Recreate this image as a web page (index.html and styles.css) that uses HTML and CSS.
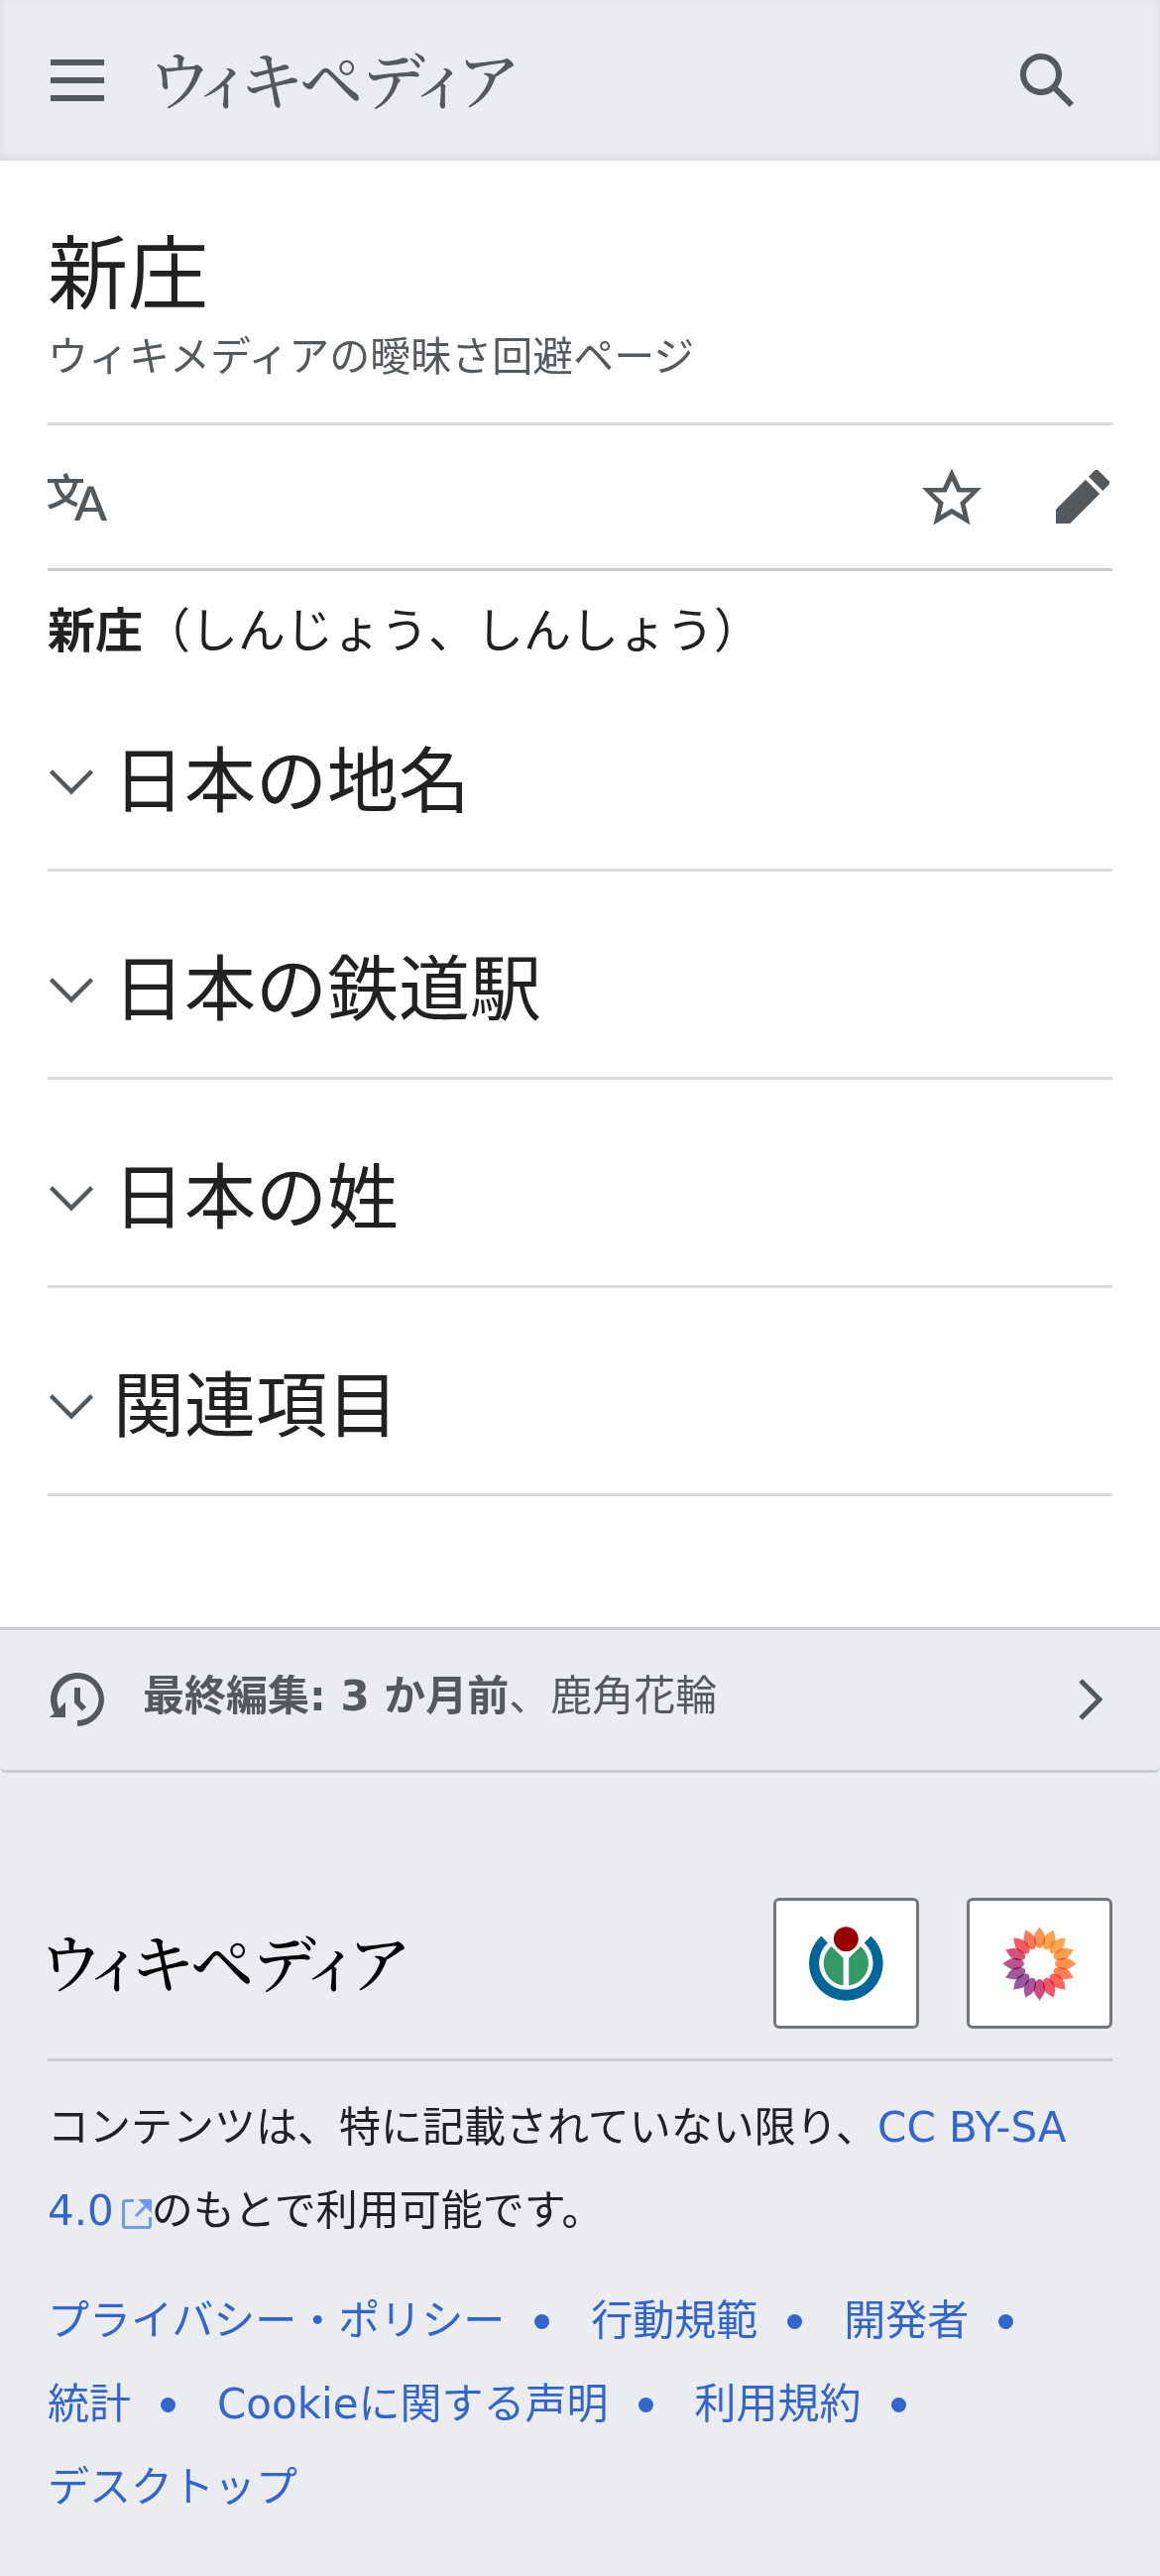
FILE: index.html
```html
<!DOCTYPE html>
<html lang="ja">
<head>
<meta charset="utf-8">
<meta name="viewport" content="width=device-width">
<title>新庄 - ウィキペディア</title>
<link rel="stylesheet" href="styles.css">
</head>
<body>
<header class="site-header">
  <button class="icon-button" type="button" aria-label="メニュー">
    <svg class="icon" viewBox="0 0 20 20"><path d="M1 3v2h18V3zm0 8h18V9H1zm0 6h18v-2H1z"/></svg>
  </button>
  <a class="wordmark" href="#">ウィキペディア</a>
  <button class="icon-button search" type="button" aria-label="検索">
    <svg class="icon" viewBox="0 0 20 20"><path fill-rule="evenodd" d="M12.2 13.6a7 7 0 1 1 1.4-1.4l5.4 5.4-1.4 1.4zM13 8A5 5 0 1 1 3 8a5 5 0 0 1 10 0"/></svg>
  </button>
</header>

<main class="content">
  <div class="heading">
    <h1>新庄</h1>
    <p class="tagline">ウィキメディアの曖昧さ回避ページ</p>
  </div>
  <nav class="actions" aria-label="ページ操作">
    <a href="#" aria-label="言語"><svg class="icon" viewBox="0 0 20 20"><path d="M20 18h-1.44a.6.600 0 0 1-.4-.12.800.800 0 0 1-.23-.31L17 15h-5l-1 2.540a.8.800 0 0 1-.22.300.6.600 0 0 1-.4.140H9l4.550-11.470h1.890zm-3.530-4.310L14.890 9.500a12 12 0 0 1-.39-1.240q-.090.370-.19.690l-.19.560-1.580 4.190zm-6.300-1.580a13.400 13.400 0 0 1-2.910-1.410 11.460 11.460 0 0 0 2.810-5.370H12V4H7.310a4 4 0 0 0-.2-.56C6.870 2.790 6.600 2 6.600 2l-1.470.500s.4.890.6 1.500H0v1.330h2.150A11.230 11.230 0 0 0 5 10.700a17.200 17.200 0 0 1-5 2.100q.560.820.870 1.380a23.300 23.300 0 0 0 5.220-2.510 15.600 15.600 0 0 0 3.560 1.770zM3.630 5.330h4.910a8.100 8.100 0 0 1-2.450 4.450 9.100 9.100 0 0 1-2.460-4.450"/></svg></a>
    <a class="push" href="#" aria-label="ウォッチ"><svg class="icon" viewBox="0 0 20 20"><path d="M20 7h-7L10 .500 7 7H0l5.460 5.470-1.640 7 6.180-3.700 6.180 3.730-1.630-7zm-10 6.900-3.760 2.270 1-4.280L3.500 8.500h4.610L10 4.600l1.900 3.900h4.600l-3.730 3.400 1 4.280z"/></svg></a>
    <a href="#" aria-label="編集"><svg class="icon" viewBox="0 0 20 20"><path d="m16.770 8 1.940-2a1 1 0 0 0 0-1.410l-3.340-3.300a1 1 0 0 0-1.410 0L12 3.230zM1 14.250V19h4.750l9.960-9.960-4.750-4.750z"/></svg></a>
  </nav>
  <p class="lead"><b>新庄</b>（しんじょう、しんしょう）</p>
  <h2><button type="button"><svg class="chevron" viewBox="0 0 14 14"><path d="M1 4l6 6 6-6" fill="none" stroke="currentColor" stroke-width="1.300"/></svg>日本の地名</button></h2>
  <h2><button type="button"><svg class="chevron" viewBox="0 0 14 14"><path d="M1 4l6 6 6-6" fill="none" stroke="currentColor" stroke-width="1.300"/></svg>日本の鉄道駅</button></h2>
  <h2><button type="button"><svg class="chevron" viewBox="0 0 14 14"><path d="M1 4l6 6 6-6" fill="none" stroke="currentColor" stroke-width="1.300"/></svg>日本の姓</button></h2>
  <h2><button type="button"><svg class="chevron" viewBox="0 0 14 14"><path d="M1 4l6 6 6-6" fill="none" stroke="currentColor" stroke-width="1.300"/></svg>関連項目</button></h2>
</main>

<footer class="site-footer">
  <div class="last-edit">
    <svg class="icon" viewBox="0 0 20 20"><path d="M10 1a9 9 0 0 0-7.700 13.640L.6 16H6v-5.200l-2.100 2.300A7 7 0 1 1 10 17v2a9 9 0 0 0 0-18M9 6v5.200l2.600 2.600 1.400-1.300-2-2V6z"/></svg>
    <p><a class="edited" href="#">最終編集: 3 か月前</a>、<a href="#">鹿角花輪</a></p>
    <svg class="next" viewBox="0 0 24 42"><path d="M2 2l19 19L2 40" fill="none" stroke="currentColor" stroke-width="5"/></svg>
  </div>
  <div class="footer-body">
    <div class="brand">
      <span class="wordmark">ウィキペディア</span>
      <a class="badge" href="#" aria-label="Wikimedia Foundation">
        <svg viewBox="168 152 226 226">
          <path fill="#069" d="M205 181A112.500 112.500 0 1 0 356 181L336 202A82 82 0 1 1 225 202Z"/>
          <path fill="#396" d="M236 212A68 68 0 0 0 272 331V248ZM325 212A68 68 0 0 1 289 331V248Z"/>
          <circle cx="280.500" cy="190" r="37.500" fill="#900"/>
        </svg>
      </a>
      <a class="badge" href="#" aria-label="MediaWiki">
        <svg class="flower" viewBox="-113 -113 226 226">
          <defs><path id="petal" d="M0-112C5-102 19-92 17-73C15-58 9-48 0-47C-9-48-15-58-17-73C-19-92-5-102 0-112Z"/></defs>
          <use href="#petal" fill="#fb9450"/>
          <use href="#petal" fill="#fba44c" transform="rotate(22.500)"/>
          <use href="#petal" fill="#fca850" transform="rotate(45)"/>
          <use href="#petal" fill="#fd9e50" transform="rotate(67.500)"/>
          <use href="#petal" fill="#fe9353" transform="rotate(90)"/>
          <use href="#petal" fill="#ff8056" transform="rotate(112.500)"/>
          <use href="#petal" fill="#ff655b" transform="rotate(135)"/>
          <use href="#petal" fill="#ef5668" transform="rotate(157.500)"/>
          <use href="#petal" fill="#cc4e78" transform="rotate(180)"/>
          <use href="#petal" fill="#a85596" transform="rotate(202.500)"/>
          <use href="#petal" fill="#9659a0" transform="rotate(225)"/>
          <use href="#petal" fill="#a35897" transform="rotate(247.500)"/>
          <use href="#petal" fill="#b9558a" transform="rotate(270)"/>
          <use href="#petal" fill="#d25579" transform="rotate(292.500)"/>
          <use href="#petal" fill="#f45a66" transform="rotate(315)"/>
          <use href="#petal" fill="#fd7659" transform="rotate(337.500)"/>
        </svg>
      </a>
    </div>
    <p class="license">コンテンツは、特に記載されていない限り、<a href="#">CC BY-SA 4.0<svg class="external" viewBox="0 0 30 30"><path fill="none" stroke="currentColor" stroke-width="3" d="M12 1.500H3.500a2 2 0 0 0-2 2V26.500a2 2 0 0 0 2 2H26.500a2 2 0 0 0 2-2V18M14 17L25 6"/><path fill="currentColor" d="M16 0H30V14Z"/></svg></a>のもとで利用可能です。</p>
    <ul class="places">
      <li><a href="#">プライバシー・ポリシー</a></li>
      <li><a href="#">行動規範</a></li>
      <li><a href="#">開発者</a></li>
      <li><a href="#">統計</a></li>
      <li><a href="#">Cookieに関する声明</a></li>
      <li><a href="#">利用規約</a></li>
      <li><a href="#">デスクトップ</a></li>
    </ul>
  </div>
</footer>
</body>
</html>
```
FILE: styles.css
```css
* { box-sizing: border-box; }
body {
  margin: 0;
  background: #eaecf0;
  color: #202122;
  font: 42px/84px "DejaVu Sans", "Noto Sans CJK JP", sans-serif;
}
h1, h2, p, ul { margin: 0; padding: 0; font-weight: 400; }
a { color: #3366cc; text-decoration: none; }
button { padding: 0; border: 0; background: none; color: inherit; font: inherit; }
svg { display: block; }
.icon { width: 60px; height: 60px; fill: #54595d; }

.site-header {
  display: flex;
  align-items: center;
  height: 162px;
  padding: 0 84px 0 48px;
  box-shadow: inset 0 -3px 9px rgba(0, 0, 0, 0.08);
}
.wordmark {
  padding-bottom: 8px;
  color: #54595d;
  font: 500 64px/84px "Noto Serif CJK JP", "Noto Sans CJK JP", serif;
  font-feature-settings: "palt";
  white-space: nowrap;
}
.site-header .wordmark { margin-left: 44px; }
.search { margin-left: auto; }

.content { padding: 0 48px 132px; background: #fff; }
.heading { padding: 62px 0 36px; border-bottom: 3px solid #dadbdc; }
h1 { font-size: 81px; line-height: 106px; }
.tagline { color: #54595d; font-size: 41px; line-height: 60px; }
.actions {
  display: flex;
  align-items: center;
  gap: 72px;
  height: 147px;
  border-bottom: 3px solid #c8cbcc;
}
.actions .push { margin-left: auto; }
.lead { padding: 20px 0 17px; font-size: 48px; line-height: 80px; }
h2 { height: 210px; padding-top: 30px; border-bottom: 3px solid #dadbdc; font-size: 72px; }
h2:first-of-type { height: 186px; padding-top: 6px; }
h2 button {
  display: flex;
  align-items: center;
  gap: 18px;
  width: 100%;
  height: 100%;
  text-align: left;
}
.chevron { width: 48px; height: 48px; color: #54595d; }

.last-edit {
  display: flex;
  align-items: center;
  height: 147px;
  padding: 0 58px 2px 48px;
  border: solid #c8ccd1;
  border-width: 3px 0;
  border-radius: 0 0 6px 6px;
  color: #54595d;
}
.last-edit p { flex: 1; margin-left: 36px; padding-bottom: 6px; }
.last-edit a { color: inherit; }
.edited { font-weight: 700; }
.next { width: 24px; height: 42px; }

.footer-body { padding: 126px 48px 48px; }
.brand {
  display: flex;
  align-items: center;
  gap: 48px;
  padding-bottom: 30px;
  border-bottom: 3px solid #c8ccd1;
}
.brand .wordmark { margin: 0 auto 0 -6px; color: #000; }
.badge {
  display: flex;
  align-items: center;
  justify-content: center;
  width: 147px;
  height: 132px;
  border: 3px solid #72777d;
  border-radius: 6px;
  background: #fff;
}
.badge svg { width: 75px; height: 75px; }
.flower use { mix-blend-mode: multiply; }
.license { padding: 25px 0 27px; }
.external { display: inline-block; width: 30px; height: 30px; margin-left: 8px; vertical-align: -4px; color: #6b9bf5; }
.places { display: flex; flex-wrap: wrap; list-style: none; }
.places li { display: flex; align-items: center; }
.places li:not(:last-child)::after {
  content: "";
  width: 15px;
  height: 15px;
  margin: 0 42px 0 30px;
  border-radius: 50%;
  background: #3366cc;
}
```
